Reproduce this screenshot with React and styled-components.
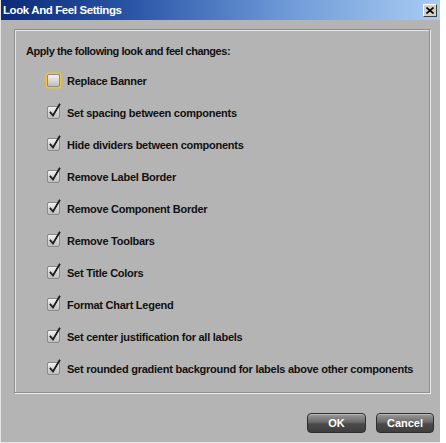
import React from "react";
import styled, { createGlobalStyle } from "styled-components";

const Global = createGlobalStyle`
  html, body { margin: 0; padding: 0; background: #ffffff; }
  body { font-family: "Liberation Sans", Arial, sans-serif; }
`;

const Dialog = styled.div`
  width: 440px;
  height: 443px;
  box-sizing: border-box;
  background: #b4b4b4;
  border-left: 1px solid #e4e4e4;
  border-bottom: 1px solid #e8e8e8;
  display: flex;
  flex-direction: column;
`;

const TitleBar = styled.div`
  height: 20px;
  flex: none;
  display: flex;
  align-items: center;
  justify-content: space-between;
  padding: 0 3px 0 2px;
  background: linear-gradient(to right, #0c2a78 0%, #2a56a8 30%, #6e9ad8 65%, #a9ccf2 100%);
`;

const Title = styled.span`
  color: #ffffff;
  font: bold 11.5px "Liberation Sans", Arial, sans-serif;
  letter-spacing: -0.4px;
`;

const CloseButton = styled.div`
  width: 14px;
  height: 13px;
  box-sizing: border-box;
  background: #d4d0c8;
  border: 1px solid;
  border-color: #ffffff #404040 #404040 #ffffff;
  display: flex;
  align-items: center;
  justify-content: center;
`;

const Body = styled.div`
  flex: 1;
  display: flex;
  flex-direction: column;
  padding: 9px 0 0 13px;
`;

const Panel = styled.div`
  width: 416px;
  height: 364px;
  box-sizing: border-box;
  border: 1px solid #8e8e8e;
  box-shadow: inset 1px 1px 0 #e6e6e6, 1px 1px 0 #ececec;
  padding: 15px 0 0 11px;
  display: flex;
  flex-direction: column;
`;

const Heading = styled.div`
  font: bold 11px "Liberation Sans", Arial, sans-serif;
  letter-spacing: -0.45px;
  color: #111;
  height: 13px;
  line-height: 13px;
  margin-bottom: 16px;
`;

const List = styled.div`
  display: flex;
  flex-direction: column;
  gap: 19px;
  padding-left: 21px;
`;

const Row = styled.label`
  display: flex;
  align-items: center;
  gap: 7px;
  height: 13px;
`;

const Box = styled.span`
  width: 13px;
  height: 13px;
  box-sizing: border-box;
  border: 1px solid #8a8a8a;
  border-radius: 2px;
  background: linear-gradient(#f2f2f2, #bdbdbd);
  position: relative;
  flex: none;
  ${(p) =>
    p.$focus &&
    `box-shadow: 0 0 0 1px #f0c040, 0 0 2px 2px rgba(240,190,60,0.6);`}
`;

const Check = styled.svg`
  position: absolute;
  left: 0px;
  top: -4px;
`;

const Label = styled.span`
  font: bold 11px "Liberation Sans", Arial, sans-serif;
  letter-spacing: -0.25px;
  color: #111;
  white-space: nowrap;
`;

const Footer = styled.div`
  flex: 1;
  display: flex;
  justify-content: flex-end;
  align-items: flex-start;
  gap: 10px;
  padding-top: 20px;
  padding-right: 6px;
`;

const Button = styled.button`
  width: ${(p) => p.$w}px;
  height: 20px;
  border: 1px solid #2e2e2e;
  border-radius: 4px;
  background: linear-gradient(#9a9a9a 0%, #6a6a6a 45%, #4a4a4a 55%, #3e3e3e 100%);
  color: #ffffff;
  font: bold 11px "Liberation Sans", Arial, sans-serif;
  padding: 0;
  box-shadow: inset 0 1px 0 #b8b8b8;
`;

const items = [
  { label: "Replace Banner", checked: false, focus: true },
  { label: "Set spacing between components", checked: true },
  { label: "Hide dividers between components", checked: true },
  { label: "Remove Label Border", checked: true },
  { label: "Remove Component Border", checked: true },
  { label: "Remove Toolbars", checked: true },
  { label: "Set Title Colors", checked: true },
  { label: "Format Chart Legend", checked: true },
  { label: "Set center justification for all labels", checked: true },
  { label: "Set rounded gradient background for labels above other components", checked: true },
];

export default function App() {
  return (
    <>
      <Global />
      <Dialog>
        <TitleBar>
          <Title>Look And Feel Settings</Title>
          <CloseButton>
            <svg width="8" height="7" viewBox="0 0 8 7">
              <path d="M0.5 0.5 L7.5 6.5 M7.5 0.5 L0.5 6.5" stroke="#000" strokeWidth="1.6" />
            </svg>
          </CloseButton>
        </TitleBar>
        <Body>
          <Panel>
            <Heading>Apply the following look and feel changes:</Heading>
            <List>
              {items.map((it) => (
                <Row key={it.label}>
                  <Box $focus={it.focus}>
                    {it.checked && (
                      <Check width="14" height="16" viewBox="0 0 14 16">
                        <path
                          d="M2.5 9.5 L5 12.5 L11.5 1.5"
                          fill="none"
                          stroke="#1a1a1a"
                          strokeWidth="1.8"
                          strokeLinecap="square"
                        />
                      </Check>
                    )}
                  </Box>
                  <Label>{it.label}</Label>
                </Row>
              ))}
            </List>
          </Panel>
          <Footer>
            <Button $w={59}>OK</Button>
            <Button $w={58}>Cancel</Button>
          </Footer>
        </Body>
      </Dialog>
    </>
  );
}
